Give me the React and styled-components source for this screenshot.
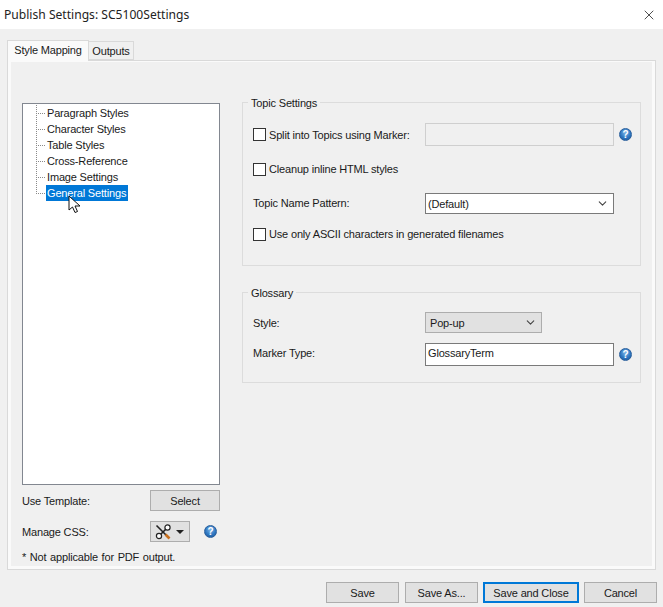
import React from "react";
import styled, { createGlobalStyle } from "styled-components";
import { X, ChevronDown } from "lucide-react";

const Global = createGlobalStyle`
  html, body { margin: 0; padding: 0; background: #f0f0f0; }
  * { box-sizing: border-box; }
`;

const Dialog = styled.div`
  width: 663px;
  height: 607px;
  background: #f0f0f0;
  overflow: hidden;
  display: flex;
  flex-direction: column;
  font-family: "Liberation Sans", sans-serif;
  font-size: 11px;
  letter-spacing: -0.17px;
  line-height: 14px;
  color: #1a1a1a;
`;

const TitleBar = styled.header`
  height: 29px;
  flex: none;
  background: #fff;
  display: flex;
  align-items: center;
  justify-content: space-between;
  padding: 0 6px 0 4px;
  font-family: "Noto Sans", sans-serif;
  font-size: 12.1px;
  letter-spacing: 0;
  color: #222;
`;

const CloseIcon = styled(X)`
  width: 16px;
  height: 16px;
  color: #222;
`;

const TabStrip = styled.div`
  display: flex;
  align-items: flex-end;
  height: 31px;
  flex: none;
  padding: 0 0 0 7px;
`;

const Tab = styled.div`
  height: ${(p) => (p.$active ? 21 : 19)}px;
  width: ${(p) => (p.$active ? 82 : 46)}px;
  margin-left: ${(p) => (p.$active ? 0 : -1)}px;
  margin-bottom: ${(p) => (p.$active ? -1 : 0)}px;
  padding: ${(p) => (p.$active ? "0 0 2px" : "1px 0 0")};
  position: relative;
  z-index: ${(p) => (p.$active ? 2 : 1)};
  background: ${(p) => (p.$active ? "#fafafa" : "#f0f0f0")};
  border: 1px solid #d9d9d9;
  border-bottom: ${(p) => (p.$active ? "none" : "1px solid #d9d9d9")};
  display: flex;
  align-items: center;
  justify-content: center;
`;

const Panel = styled.main`
  width: 649px;
  height: 510px;
  flex: none;
  margin-left: 7px;
  border: 1px solid #d9d9d9;
  display: flex;
`;

const PanelInner = styled.div`
  flex: 1;
  border: solid #fafafa;
  border-width: 1px 3px 3px 3px;
  background: #f0f0f0;
  padding: 33px 11px 0 11px;
  display: grid;
  grid-template-columns: 198px 399px;
  column-gap: 22px;
  align-items: start;
`;

const LeftColumn = styled.section`
  display: flex;
  flex-direction: column;
  padding-top: 8px;
`;

const Tree = styled.ul`
  list-style: none;
  margin: 0;
  height: 382px;
  padding: 1px 0 0 13px;
  background: #fff;
  border: 1px solid #828790;
`;

const TreeRow = styled.li`
  height: 16px;
  display: flex;
  position: relative;
`;

const Connector = styled.span`
  width: 10px;
  height: 16px;
  flex: none;
  background:
    repeating-linear-gradient(to bottom, #8a8a8a 0 1px, transparent 1px 2px) left top / 1px ${(p) => (p.$last ? 8 : 16)}px no-repeat,
    repeating-linear-gradient(to right, #8a8a8a 0 1px, transparent 1px 2px) left 8px / 10px 1px no-repeat;
`;

const TreeLabel = styled.span`
  padding: 0 2px 0 1px;
  line-height: 16px;
  white-space: nowrap;
  background: ${(p) => (p.$selected ? "#0078d7" : "transparent")};
  color: ${(p) => (p.$selected ? "#fff" : "#1a1a1a")};
`;

const Pointer = styled.svg`
  position: absolute;
  left: 32px;
  top: 10px;
  width: 14px;
  height: 19px;
`;

const ToolRow = styled.div`
  display: flex;
  align-items: center;
  height: 21px;
  margin-top: ${(p) => p.$top}px;
`;

const ToolLabel = styled.span`
  width: 128px;
  flex: none;
`;

const Button = styled.button`
  height: 21px;
  width: ${(p) => p.$w}px;
  margin-right: ${(p) => p.$after || 0}px;
  padding: 0;
  font: inherit;
  letter-spacing: inherit;
  color: #1a1a1a;
  background: #e1e1e1;
  border: ${(p) => (p.$default ? "2px solid #0078d7" : "1px solid #adadad")};
`;

const ToolMenu = styled.button`
  width: 40px;
  height: 21px;
  padding: 0 0 0 4px;
  background: #e1e1e1;
  border: 1px solid #adadad;
  display: flex;
  align-items: center;
  gap: 3px;
`;

const Caret = styled.span`
  width: 0;
  height: 0;
  border: 4px solid transparent;
  border-top: 4px solid #222;
  border-bottom: none;
`;

const Help = styled.span`
  width: 13px;
  height: 13px;
  flex: none;
  margin-left: ${(p) => p.$left || 5}px;
  border-radius: 50%;
  background: radial-gradient(circle at 50% 35%, #7db4e6 0%, #2f78c2 55%, #1a4f8f 100%);
  border: 1px solid #2a5f9c;
  color: #fff;
  font-weight: 700;
  font-size: 10px;
  line-height: 11px;
  text-align: center;
`;

const Note = styled.p`
  margin: 8px 0 0;
  word-spacing: 0.8px;
`;

const RightColumn = styled.section`
  display: flex;
  flex-direction: column;
  gap: 19px;
`;

const Group = styled.fieldset`
  margin: 0;
  padding: 0 0 0 10px;
  min-width: 0;
  height: ${(p) => p.$h}px;
  border: 1px solid #dcdcdc;
`;

const Legend = styled.legend`
  height: 14px;
  padding: 1px 3px 0;
  margin-left: -5px;
  line-height: 14px;
`;

const FormRow = styled.div`
  display: flex;
  align-items: center;
  height: ${(p) => p.$h}px;
  margin-top: ${(p) => p.$top}px;
`;

const FieldLabel = styled.span`
  width: 172px;
  flex: none;
  white-space: nowrap;
  margin-bottom: ${(p) => p.$lift || 0}px;
`;

const CheckLabel = styled.label`
  display: flex;
  align-items: center;
  gap: 3px;
  white-space: nowrap;
  margin-bottom: ${(p) => p.$lift || 0}px;
`;

const Box = styled.span`
  width: 13px;
  height: 13px;
  flex: none;
  background: #fff;
  border: 1px solid #333;
`;

const TextField = styled.div`
  width: 189px;
  height: 23px;
  padding: 0 2px 4px;
  display: flex;
  align-items: center;
  background: ${(p) => (p.$disabled ? "#f0f0f0" : "#fff")};
  border: ${(p) => (p.$disabled ? "1px solid #cfcfcf" : "1px solid #7a7a7a")};
`;

const Combo = styled.div`
  width: ${(p) => p.$w}px;
  height: 21px;
  padding: 0 4px 0 ${(p) => (p.$flat ? 4 : 2)}px;
  display: flex;
  align-items: center;
  justify-content: space-between;
  background: ${(p) => (p.$flat ? "#e1e1e1" : "#fff")};
  border: 1px solid ${(p) => (p.$flat ? "#adadad" : "#7a7a7a")};
`;

const ComboArrow = styled(ChevronDown)`
  width: 13px;
  height: 13px;
  color: #444;
`;

const Footer = styled.footer`
  display: flex;
  justify-content: flex-end;
  gap: 5px;
  padding: 12px 6px 0 0;
`;

const ToolsIcon = () => (
  <svg width="18" height="16" viewBox="0 0 18 16" fill="none">
    <path d="M1.5 1.5 L11 11" stroke="#222" strokeWidth="1.6" />
    <path d="M10.5 10.5 L14.5 14.5" stroke="#c8701e" strokeWidth="2.6" />
    <path d="M5.5 10.5 L11 5" stroke="#222" strokeWidth="1.6" />
    <circle cx="12.5" cy="3.5" r="2.6" fill="#fff" stroke="#222" strokeWidth="1.2" />
    <circle cx="4" cy="12" r="2.6" fill="#fff" stroke="#222" strokeWidth="1.2" />
  </svg>
);

const items = ["Paragraph Styles", "Character Styles", "Table Styles", "Cross-Reference", "Image Settings", "General Settings"];

export default function App() {
  return (
    <Dialog>
      <Global />
      <TitleBar>
        <span>Publish Settings: SC5100Settings</span>
        <CloseIcon strokeWidth={1.2} />
      </TitleBar>
      <TabStrip>
        <Tab $active>Style Mapping</Tab>
        <Tab>Outputs</Tab>
      </TabStrip>
      <Panel>
        <PanelInner>
          <LeftColumn>
            <Tree>
              {items.map((t, i) => (
                <TreeRow key={t}>
                  <Connector $last={i === items.length - 1} />
                  <TreeLabel $selected={i === items.length - 1}>{t}</TreeLabel>
                  {i === items.length - 1 && (
                    <Pointer viewBox="0 0 14 19">
                      <path d="M1 1 L1 15 L4.5 12 L7 17.5 L9.5 16.5 L7 11 L12 11 Z" fill="#fff" stroke="#111" strokeWidth="1" />
                    </Pointer>
                  )}
                </TreeRow>
              ))}
            </Tree>
            <ToolRow $top={5}>
              <ToolLabel>Use Template:</ToolLabel>
              <Button $w={70}>Select</Button>
            </ToolRow>
            <ToolRow $top={10}>
              <ToolLabel>Manage CSS:</ToolLabel>
              <ToolMenu>
                <ToolsIcon />
                <Caret />
              </ToolMenu>
              <Help $left={14}>?</Help>
            </ToolRow>
            <Note>* Not applicable for PDF output.</Note>
          </LeftColumn>
          <RightColumn>
            <Group $h={171}>
              <Legend>Topic Settings</Legend>
              <FormRow $h={23} $top={14}>
                <FieldLabel as={CheckLabel} $lift={5}>
                  <Box />
                  Split into Topics using Marker:
                </FieldLabel>
                <TextField $disabled />
                <Help>?</Help>
              </FormRow>
              <FormRow $h={14} $top={16}>
                <CheckLabel>
                  <Box />
                  Cleanup inline HTML styles
                </CheckLabel>
              </FormRow>
              <FormRow $h={21} $top={17}>
                <FieldLabel $lift={2}>Topic Name Pattern:</FieldLabel>
                <Combo $w={189}>
                  (Default)
                  <ComboArrow />
                </Combo>
              </FormRow>
              <FormRow $h={14} $top={13}>
                <CheckLabel>
                  <Box />
                  Use only ASCII characters in generated filenames
                </CheckLabel>
              </FormRow>
            </Group>
            <Group $h={98}>
              <Legend>Glossary</Legend>
              <FormRow $h={21} $top={13}>
                <FieldLabel>Style:</FieldLabel>
                <Combo $w={117} $flat>
                  Pop-up
                  <ComboArrow />
                </Combo>
              </FormRow>
              <FormRow $h={23} $top={10}>
                <FieldLabel $lift={4}>Marker Type:</FieldLabel>
                <TextField>GlossaryTerm</TextField>
                <Help>?</Help>
              </FormRow>
            </Group>
          </RightColumn>
        </PanelInner>
      </Panel>
      <Footer>
        <Button $w={73} $after={1}>Save</Button>
        <Button $w={73}>Save As...</Button>
        <Button $w={96} $default>Save and Close</Button>
        <Button $w={73}>Cancel</Button>
      </Footer>
    </Dialog>
  );
}
